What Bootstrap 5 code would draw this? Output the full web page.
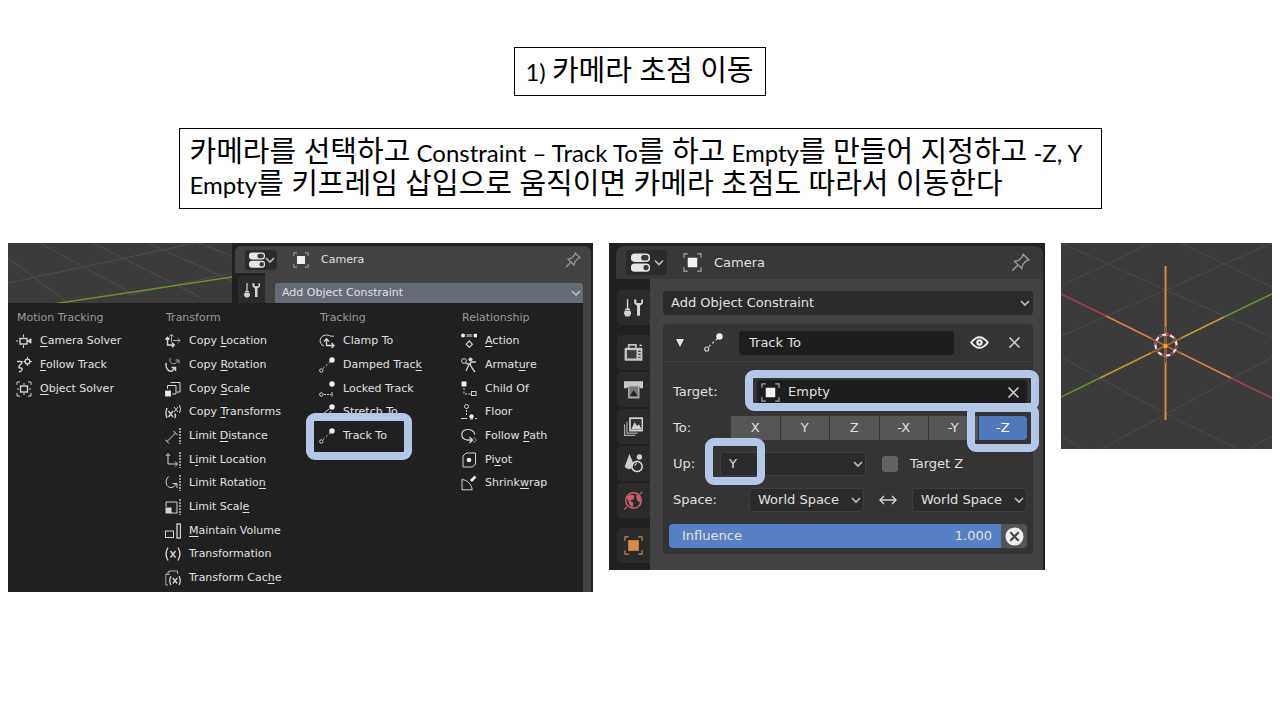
<!DOCTYPE html>
<html lang="ko">
<head>
<meta charset="utf-8">
<meta name="viewport" content="width=device-width, initial-scale=1">
<title>카메라 초점 이동</title>
<link href="https://cdn.jsdelivr.net/npm/bootstrap@5.3.0/dist/css/bootstrap.min.css" rel="stylesheet">
<script src="https://cdn.jsdelivr.net/npm/bootstrap@5.3.0/dist/js/bootstrap.bundle.min.js" defer></script>
<style>
body{background:#fff;color:#000;font-family:Lato,"Noto Sans CJK KR",sans-serif}
.slide-text{font-size:29px;line-height:32px;font-weight:400;border:1px solid #000}
.latin{font-size:24px;line-height:1px}
.slide-title{padding:6px 11px 9px 10px;margin-top:47px}
.slide-body{max-width:923px;padding:6px 10px 9px;margin-top:32px}
.shots{display:grid;grid-template-columns:585fr 436fr 211fr;gap:16px;padding:0 8px;margin-top:34px;align-items:start}
.shot{font-family:"DejaVu Sans",sans-serif;color:#e0e0e0;background:#202020;min-width:0}
.shot button,.shot input,.shot select{font:inherit;color:inherit;border:0}
.ico{width:16px;height:16px;flex:none;fill:none;stroke:#d4d4d4;stroke-width:1;overflow:visible}
.mark-box::after{content:"";position:absolute;border:8px solid #b4c7e7;border-radius:9px;z-index:3;pointer-events:none}

/* constraint menu */
.shot-menu{font-size:11px;line-height:16px}
.view{flex:224 1 0;min-width:0;height:60px;display:block;background:#3b3b3b}
.props{flex:356 1 0;min-width:0;padding:3px 2px 0 3px}
.props-head{background:#424242;height:27px;border-radius:6px 6px 0 0;padding:0 10px 0 10px}
.editor-type{background:#2b2b2b;border-radius:4px;padding:0 2px 0 4px;height:20px}
.props-body{height:30px;background:#424242}
.props-tab{width:30px;background:#202020;padding:3px 0 0 3px}
.props-tab button{width:27px;height:27px;background:#2b2b2b;border-radius:4px 0 0 0}
.add-btn{margin:10px 8px 0 10px;height:20px;background:#666b78!important;border-radius:3px 3px 0 0;padding:0 2px 0 7px}
.menu-pop{background:#202020;border-right:8px solid #424242;margin-right:2px;padding:3px 0 2px 8px;display:grid;grid-template-columns:149fr 154fr 142fr 122fr;min-height:289px}
.menu-col{display:grid;grid-template-rows:repeat(12,1fr);min-width:0;align-items:center}
.menu-col h2{font-size:11px;font-weight:400;color:#999;margin:0 0 0 1px;line-height:16px}
.menu-item{background:none;padding:0;text-align:left;position:relative;white-space:nowrap;display:flex;align-items:center;gap:8px}
.menu-item u{text-underline-offset:2px;text-decoration-thickness:1px}
.picked::after{left:-13px;width:106px;top:-15px;height:47px}

/* constraint panel */
.shot-panel{font-size:13px;line-height:20px;padding:3px 2px 0 7px}
.shot-panel .ico{width:19px;height:19px}
.shot-panel .ico.ico-sm{width:16px;height:16px}
.shot-panel .ico.ico-chev,.ico.ico-chev{width:10px}
.panel-head{background:#383838;border-radius:8px 8px 0 0;height:33px;padding:0 13px 0 10px}
.panel-head .editor-type{height:25px;padding:0 3px 0 5px}
.tabs-col{width:34px;flex:none;background:#202020;padding:11px 0 0 1px;display:flex;flex-direction:column;gap:2px}
.tabs-col button{height:35px;width:33px;background:#2a2a2a;border-radius:5px 0 0 5px;padding:0;display:flex;align-items:center;justify-content:center}
.panel-main{background:#424242;padding:12px 10px 16px 13px;min-width:0}
.fld{background-color:#2b2b2b!important;border-radius:4px;height:24px;padding:0 8px;min-width:0;width:100%;outline:0}
select.fld{appearance:none;padding-right:22px;background-image:url("data:image/svg+xml,%3Csvg xmlns='http://www.w3.org/2000/svg' viewBox='0 0 10 10'%3E%3Cpath d='M1 3l4 4 4-4' fill='none' stroke='%23bbb' stroke-width='1.7'/%3E%3C/svg%3E");background-repeat:no-repeat;background-position:right 3px center;background-size:10px}
select.edged{box-shadow:inset 0 0 0 1px #3e3e3e;padding-left:9px}
.fld.dark{background-color:#1d1d1d!important}
input.fld.dark{padding-left:10px}
.cons{background:#343434;border-radius:4px;margin-top:9px}
.cons-head{height:38px;border-bottom:1px solid #404040;padding:0 9px 0 9px}
.cons-body{padding:18px 6px 6px 10px;display:grid;row-gap:12px}
.cons-row{display:flex;align-items:center;height:24px;position:relative}
.infl-row{margin-left:-4px}
.lab-to{width:58px;flex:none}.lab-target{width:84px;flex:none}.lab-up{width:47px;flex:none}.lab-space{width:76px;flex:none}
.up-pick{flex:146 1 0}
.up-side{flex:145 1 0}
.hl{position:relative}
.hl-target::after{inset:-10px -12px -7px}
.hl-z::after{inset:-12px}
.hl-y::after{left:-15px;top:-14px;width:60px;height:47px}
.axis{display:grid;grid-template-columns:repeat(6,1fr);gap:1px;flex:1}
.axis button{background:#565656;height:24px;padding:0;width:100%}
.axis .on{background:#5079bd;color:#fff;border-radius:0 4px 4px 0}
.chk{appearance:none;width:16px;height:16px;background:#636363;border-radius:3px;margin:0}
.infl{position:relative;flex:1;height:24px}
.infl input{appearance:none;width:100%;height:24px;background:#5680c2;border-radius:4px 0 0 4px;display:block;margin:0}
.infl input::-webkit-slider-thumb{appearance:none;width:1px;height:24px;background:#5680c2}
.infl-text{position:absolute;inset:0;padding:0 9px 0 13px;pointer-events:none}
.clear-btn{width:26px;height:24px;background:#545454!important;border-radius:0 4px 4px 0;padding:0}
.empty-view{background:#3b3b3b}
</style>
</head>
<body>
<svg width="0" height="0" class="position-absolute" aria-hidden="true">
<symbol id="i-editor" viewBox="0 0 16 16"><rect x="0" y="0.5" width="16" height="7" rx="3" fill="#e6e6e6" stroke="none"/><rect x="8.500" y="1.700" width="6.300" height="4.600" rx="2" fill="#3a3a3a" stroke="none"/><rect x="0" y="8.800" width="16" height="7" rx="3" fill="#e6e6e6" stroke="none"/><rect x="10.500" y="10" width="4.400" height="4.600" rx="2" fill="#3a3a3a" stroke="none"/></symbol>
<symbol id="i-object" viewBox="0 0 16 16"><rect x="4" y="4" width="8" height="8" fill="#f2f2f2" stroke="none"/><path d="M4 .8H.8V4M12 .8h3.2V4M4 15.2H.8V12M12 15.2h3.2V12" stroke="#a8a8a8"/></symbol>
<symbol id="i-pin" viewBox="0 0 16 16"><path d="M1 15l5-5M3 7l6 6 1-3.500 3-3 2-.7L10.200 1 9.500 3.200 6.500 6.200z" stroke="#989898" stroke-width="1.200"/></symbol>
<symbol id="i-chev" viewBox="0 0 10 10"><path d="M1 3l4 4 4-4" stroke="#bbb" stroke-width="1.700"/></symbol>
<symbol id="i-tool" viewBox="0 0 16 16"><path d="M3 1v8M1 9.500h4" stroke-width="1.200"/><path d="M1 11h4l.5 2-1 2h-3l-1-2z" fill="#d4d4d4"/><path d="M8.500 1v3.500l2.500 2V15h2.500V6.500l2.500-2V1l-1.500.5v2.700h-4V1.500z" fill="#d4d4d4" stroke="none"/></symbol>
<symbol id="i-camsolve" viewBox="0 0 16 16"><rect x="4" y="5.500" width="7" height="5.500" stroke-width="1.400"/><path d="M0 8h2M7.500 1.500v3M7.500 12v3"/><path d="M11.500 8L15 5.800v4.400z" fill="#d4d4d4"/></symbol>
<symbol id="i-follow" viewBox="0 0 16 16"><path d="M1 4.500h3.500c3 0 1 2-.5 3.500s-2 3 1 3c2 0 1.500 3-2 4" stroke-width="1.400"/><circle cx="11.500" cy="4.500" r="2.400" stroke-width="1.400"/><path d="M11.500 0v2M11.500 7v2M7.500 4.500H9M14 4.500h2"/></symbol>
<symbol id="i-objsolve" viewBox="0 0 16 16"><rect x="4.500" y="5" width="7" height="6" stroke-width="1.400"/><path d="M4 1H1v3M12 1h3v3M4 15H1v-3M12 15h3v-3M8 2v2M8 12v2M1 8h2M13 8h2"/></symbol>
<symbol id="i-cloc" viewBox="0 0 16 16"><path d="M2.500 4.500V12H9M.5 6.500l2-2.300 2 2.300M7 9.700L9.300 12 7 14.300" stroke-width="1.400"/><path d="M6.500 9V1.500M4.500 3.500l2-2.300 2 2.300M8 7.500h7M12.500 5l2.700 2.500L12.500 10" stroke="#aaa"/></symbol>
<symbol id="i-crot" viewBox="0 0 16 16"><path d="M5.500 1C3.500 4 6 7.500 10 6.500l3.500-3M10.500 3H14v3.500" stroke="#aaa"/><path d="M1.200 6c-1 5 2 9 6 8l2.500-3M6.500 10.500h4V14" stroke-width="1.400"/></symbol>
<symbol id="i-cscale" viewBox="0 0 16 16"><path d="M5.500 1.500h9.500V11h-3M2.500 8V4.500h8.500v8.500H7"/><rect x=".5" y="10" width="5" height="5" fill="#f0f0f0"/></symbol>
<symbol id="i-ctrans" viewBox="0 0 16 16"><path d="M2 4Q0 9 2 14M10 9.500Q11 13 9.500 14M3.500 7l4.500 6M8 7l-4.500 6" stroke-width="1.400"/><path d="M9 3l4 5M13 3L9 8M14.500 1Q16.500 5 14.500 9"/></symbol>
<symbol id="i-ldist" viewBox="0 0 16 16"><path d="M2 13.500L10.500 5M0 11.500l4 4M8.500 3l4 4"/><path d="M15 0v16" stroke-dasharray="2 1" stroke-width="1.300"/></symbol>
<symbol id="i-lloc" viewBox="0 0 16 16"><path d="M3 2v10h9M1 4l2-2.500L5 4M10 9.500l2.500 2.500-2.500 2.500"/><path d="M15 0v16" stroke-dasharray="2 1" stroke-width="1.300"/></symbol>
<symbol id="i-lrot" viewBox="0 0 16 16"><path d="M3.500 1.500C-1 6 1.500 13 6 12.500c3 0 4-2 5.500-4M7.500 8.500H12V13"/><path d="M15 0v16" stroke-dasharray="2 1" stroke-width="1.300"/></symbol>
<symbol id="i-lscale" viewBox="0 0 16 16"><path d="M1 8V3h11v11H6"/><rect x="1" y="9" width="5" height="5" fill="#d4d4d4"/><path d="M15 0v16" stroke-dasharray="2 1" stroke-width="1.300"/></symbol>
<symbol id="i-vol" viewBox="0 0 16 16"><rect x=".5" y="8" width="8" height="6.500"/><rect x="12" y="1" width="3.500" height="14" stroke-width="1.300"/></symbol>
<symbol id="i-trans" viewBox="0 0 16 16"><path d="M3 1.500Q-.8 8 3 14.500M13 1.500q3.800 6.500 0 13M5.500 5l5 6.500M10.500 5l-5 6.500" stroke-width="1.400"/></symbol>
<symbol id="i-cache" viewBox="0 0 16 16"><path d="M3 15H.8V4.500L4 1h8.500v3M4 1v3.500H1" stroke="#aaa"/><path d="M6 6q-2.500 4.500 0 9M14 6q2.500 4.500 0 9M7.800 8l4.400 5.500M12.200 8l-4.400 5.500" stroke-width="1.300"/></symbol>
<symbol id="i-clamp" viewBox="0 0 16 16"><path d="M5 13C-1 11 0 2 7.500 2c3 0 4 2 7.500 1"/><path d="M7.500 13V6.500M5 8.500l2.500-2.700L10 8.500M7.500 12.500H15M12.500 10l2.500 2.500-2.500 2.500" stroke-width="1.400"/></symbol>
<symbol id="i-track" viewBox="0 0 16 16"><circle cx="13" cy="3" r="2.700" fill="#eee" stroke="none"/><circle cx="2.300" cy="13.500" r="1.700"/><path d="M4 11.500L11 5" stroke-dasharray="2 2"/></symbol>
<symbol id="i-stretch" viewBox="0 0 16 16"><circle cx="13" cy="3" r="2.700" fill="#eee" stroke="none"/><path d="M10 5L4 10M12 7l-4 6"/><circle cx="2.300" cy="13.500" r="1.700"/></symbol>
<symbol id="i-locked" viewBox="0 0 16 16"><circle cx="13" cy="3" r="2.700" fill="#eee" stroke="none"/><circle cx="2.300" cy="13.500" r="1.700"/><path d="M5 13.500h7" stroke-dasharray="2 1"/><path d="M13 11v4.500"/></symbol>
<symbol id="i-action" viewBox="0 0 16 16"><circle cx="2" cy="2.500" r="2" fill="#eee" stroke="none"/><circle cx="14.500" cy="2.500" r="2" fill="#eee" stroke="none"/><path d="M4.500 1h7.500L10.500 2.500 12 4H4.500L6 2.500z" fill="#888" stroke="none"/><path d="M8.300 8l3 3.200-3 3.200-3-3.200z" stroke-width="1.200"/></symbol>
<symbol id="i-arm" viewBox="0 0 16 16"><circle cx="3" cy="4" r="2.400"/><circle cx="9.500" cy="2.500" r="1.600" fill="#ddd"/><path d="M5 6l3 1.500L5 14M8 7l3-2h4M9 7l2 4 3 4" stroke-width="1.300"/></symbol>
<symbol id="i-child" viewBox="0 0 16 16"><rect x=".5" y=".5" width="5" height="5" fill="#eee" stroke="none"/><path d="M3 7v6h7" stroke-dasharray="2 1.500"/><rect x="10.500" y="10.500" width="4.500" height="4"/></symbol>
<symbol id="i-floor" viewBox="0 0 16 16"><circle cx="5.500" cy="2.500" r="2"/><path d="M5.500 6v5" stroke-dasharray="2 1"/><circle cx="10.500" cy="12.500" r="2.200" fill="#eee" stroke="none"/><path d="M0 14.500h6M9 15h3M14 14.500h2"/></symbol>
<symbol id="i-path" viewBox="0 0 16 16"><path d="M6 12C-1 11-1 2 6.500 1.500c4-.2 6.500 2 7.500 5" stroke-width="1.200"/><path d="M6 12h5M8.500 9l3 3-3 3" stroke-width="1.400"/><path d="M12.500 9l3 3-3 3" stroke="#999"/></symbol>
<symbol id="i-pivot" viewBox="0 0 16 16"><path d="M2 4l3-3h9.500v11l-3 3H2z"/><circle cx="8" cy="8" r="2.300" fill="#eee" stroke="none"/></symbol>
<symbol id="i-shrink" viewBox="0 0 16 16"><path d="M1 4.500v10.300h10.200C10.500 9 6 5 1 4.500z"/><path d="M10 6l4.500-4.500" stroke-width="2.600" stroke="#eee"/></symbol>
<symbol id="i-render" viewBox="0 0 16 16"><path d="M4 4V1.500h6V4" stroke="#c4c4c4" stroke-width="1.500"/><rect x=".5" y="4" width="15" height="11" rx="1" fill="#c4c4c4" stroke="none"/><rect x="2.500" y="6" width="8" height="7" fill="#3b3b3b" stroke="none"/><path d="M12 7h2M12 9.500h2M12 12h2" stroke="#333"/><path d="M13 2h2" stroke-width="1.300"/></symbol>
<symbol id="i-print" viewBox="0 0 16 16"><path d="M0 1h16v6h-2.500V6h-11v1H0z" fill="#c8c8c8" stroke="none"/><rect x="4" y="5" width="8.500" height="10" fill="#777" stroke="#bbb"/><path d="M5 13.500l3-5 3.500 5z" fill="#222" stroke="none"/></symbol>
<symbol id="i-layers" viewBox="0 0 16 16"><path d="M2.500 4v9.500h9M.5 6v9.500h9" stroke="#aaa"/><rect x="5" y="1" width="10.500" height="10.500" fill="#333" stroke-width="1.400"/><path d="M6 10.500l3-6 2 3 1.500-1.500 2.500 4.500z" fill="#d0d0d0" stroke="none"/></symbol>
<symbol id="i-scene" viewBox="0 0 16 16"><path d="M4.500 0L9 10q-4 5-8.500 1z" fill="#ccc" stroke="none"/><circle cx="13" cy="2.500" r="2.300" fill="#ccc" stroke="none"/><circle cx="11" cy="10.500" r="4.300" fill="#2a2a2a" stroke-width="1.300"/><path d="M9 10q.5-2 2-2"/></symbol>
<symbol id="i-world" viewBox="0 0 16 16"><circle cx="8" cy="8" r="6.500" stroke="#c95f6b" stroke-width="1.300"/><path d="M2 5l4-2 3 1-1 3-3 1 3 2-1 4-2-2zM10 3l4 2v5l-3-2z" fill="#c95f6b" stroke="none"/><path d="M0 15.500l2.500-2M13 3l2.500-2.500" stroke="#c95f6b"/></symbol>
<symbol id="i-eye" viewBox="0 0 16 16"><path d="M1 8q7-9 14 0-7 9-14 0z" stroke="#eee" stroke-width="1.700"/><circle cx="8" cy="8" r="2.700" stroke="none" fill="#eee"/><circle cx="8" cy="8" r=".9" fill="#333" stroke="none"/></symbol>
<symbol id="i-x" viewBox="0 0 16 16"><path d="M3.800 3.800l8.400 8.400M12.200 3.800l-8.400 8.400" stroke-width="1.300"/></symbol>
</svg>

<main>
<div class="d-flex flex-column align-items-center px-2">
<h1 class="slide-text slide-title mb-0"><span class="latin">1) </span>카메라 초점 이동</h1>
<p class="slide-text slide-body w-100 mb-0">카메라를 선택하고<span class="latin"> Constraint – Track To</span>를 하고<span class="latin"> Empty</span>를 만들어 지정하고<span class="latin"> -Z, Y</span><br><span class="latin">Empty</span>를 키프레임 삽입으로 움직이면 카메라 초점도 따라서 이동한다</p>
</div>

<div class="shots">
<section class="shot shot-menu" aria-label="Add Object Constraint">
<div class="d-flex">
<svg class="view" viewBox="0 0 224 60" preserveAspectRatio="none" aria-hidden="true"><g stroke="#4d4d4d" fill="none"><path d="M0 40L224-8M0 15L60 60M32 0l95 52M85 0l107 54M140 0l84 38M190 0l34 13M120 52L224 30"/></g><path d="M45 61L224 34" stroke="#6b9029" stroke-width="1.500"/></svg>
<div class="props">
<div class="props-head d-flex align-items-center"><button type="button" class="editor-type d-flex align-items-center" aria-label="Editor type"><svg class="ico"><use href="#i-editor"/></svg><svg class="ico ico-chev"><use href="#i-chev"/></svg></button><svg class="ico ms-3"><use href="#i-object"/></svg><span class="ms-2 ps-1">Camera</span><svg class="ico ms-auto"><use href="#i-pin"/></svg></div>
<div class="props-body d-flex"><div class="props-tab"><button type="button" class="p-0" aria-label="Tool"><svg class="ico"><use href="#i-tool"/></svg></button></div><button type="button" class="add-btn flex-fill d-flex align-items-center justify-content-between"><span>Add Object Constraint</span><svg class="ico ico-chev"><use href="#i-chev"/></svg></button></div>
</div>
</div>
<div class="menu-pop">
<div class="menu-col"><h2>Motion Tracking</h2>
<button class="menu-item" type="button"><svg class="ico"><use href="#i-camsolve"/></svg><span><u>C</u>amera Solver</span></button>
<button class="menu-item" type="button"><svg class="ico"><use href="#i-follow"/></svg><span><u>F</u>ollow Track</span></button>
<button class="menu-item" type="button"><svg class="ico"><use href="#i-objsolve"/></svg><span><u>O</u>bject Solver</span></button></div>
<div class="menu-col"><h2>Transform</h2>
<button class="menu-item" type="button"><svg class="ico"><use href="#i-cloc"/></svg><span>Copy <u>L</u>ocation</span></button>
<button class="menu-item" type="button"><svg class="ico"><use href="#i-crot"/></svg><span>Copy <u>R</u>otation</span></button>
<button class="menu-item" type="button"><svg class="ico"><use href="#i-cscale"/></svg><span>Copy <u>S</u>cale</span></button>
<button class="menu-item" type="button"><svg class="ico"><use href="#i-ctrans"/></svg><span>Copy <u>T</u>ransforms</span></button>
<button class="menu-item" type="button"><svg class="ico"><use href="#i-ldist"/></svg><span>Limit <u>D</u>istance</span></button>
<button class="menu-item" type="button"><svg class="ico"><use href="#i-lloc"/></svg><span>L<u>i</u>mit Location</span></button>
<button class="menu-item" type="button"><svg class="ico"><use href="#i-lrot"/></svg><span>Limit Rotatio<u>n</u></span></button>
<button class="menu-item" type="button"><svg class="ico"><use href="#i-lscale"/></svg><span>Limit Scal<u>e</u></span></button>
<button class="menu-item" type="button"><svg class="ico"><use href="#i-vol"/></svg><span><u>M</u>aintain Volume</span></button>
<button class="menu-item" type="button"><svg class="ico"><use href="#i-trans"/></svg><span>Transformation</span></button>
<button class="menu-item" type="button"><svg class="ico"><use href="#i-cache"/></svg><span>Transform Cac<u>h</u>e</span></button></div>
<div class="menu-col"><h2>Tracking</h2>
<button class="menu-item" type="button"><svg class="ico"><use href="#i-clamp"/></svg><span>Clamp To</span></button>
<button class="menu-item" type="button"><svg class="ico"><use href="#i-track"/></svg><span>Damped Trac<u>k</u></span></button>
<button class="menu-item" type="button"><svg class="ico"><use href="#i-locked"/></svg><span>Locked Track</span></button>
<button class="menu-item" type="button"><svg class="ico"><use href="#i-stretch"/></svg><span>Stretch To</span></button>
<button class="menu-item mark-box picked" type="button"><svg class="ico"><use href="#i-track"/></svg><span>Track To</span></button></div>
<div class="menu-col"><h2>Relationship</h2>
<button class="menu-item" type="button"><svg class="ico"><use href="#i-action"/></svg><span><u>A</u>ction</span></button>
<button class="menu-item" type="button"><svg class="ico"><use href="#i-arm"/></svg><span>Armat<u>u</u>re</span></button>
<button class="menu-item" type="button"><svg class="ico"><use href="#i-child"/></svg><span>Child Of</span></button>
<button class="menu-item" type="button"><svg class="ico"><use href="#i-floor"/></svg><span>Floor</span></button>
<button class="menu-item" type="button"><svg class="ico"><use href="#i-path"/></svg><span>Follow <u>P</u>ath</span></button>
<button class="menu-item" type="button"><svg class="ico"><use href="#i-pivot"/></svg><span>Pi<u>v</u>ot</span></button>
<button class="menu-item" type="button"><svg class="ico"><use href="#i-shrink"/></svg><span>Shrink<u>w</u>rap</span></button></div>
</div>
</section>

<section class="shot shot-panel" aria-label="Track To constraint">
<div class="panel-head d-flex align-items-center"><button type="button" class="editor-type d-flex align-items-center gap-1" aria-label="Editor type"><svg class="ico"><use href="#i-editor"/></svg><svg class="ico ico-chev"><use href="#i-chev"/></svg></button><svg class="ico ms-3"><use href="#i-object"/></svg><span class="ms-2 ps-1">Camera</span><svg class="ico ms-auto"><use href="#i-pin"/></svg></div>
<div class="d-flex">
<div class="tabs-col">
<button type="button" aria-label="Tool" class="mb-2"><svg class="ico"><use href="#i-tool"/></svg></button>
<button type="button" aria-label="Render"><svg class="ico"><use href="#i-render"/></svg></button>
<button type="button" aria-label="Output"><svg class="ico"><use href="#i-print"/></svg></button>
<button type="button" aria-label="View layer"><svg class="ico"><use href="#i-layers"/></svg></button>
<button type="button" aria-label="Scene"><svg class="ico"><use href="#i-scene"/></svg></button>
<button type="button" aria-label="World" class="mb-2"><svg class="ico"><use href="#i-world"/></svg></button>
<button type="button" aria-label="Object"><svg class="ico" viewBox="0 0 16 16"><rect x="3.500" y="3.500" width="9" height="9" fill="#d58c45" stroke="none"/><path d="M4 .8H.8V4M12 .8h3.200V4M4 15.200H.8V12M12 15.200h3.200V12" stroke="#c98a50"/></svg></button>
</div>
<div class="panel-main flex-fill">
<select class="fld d-block" aria-label="Add Object Constraint"><option>Add Object Constraint</option></select>
<div class="cons">
<div class="cons-head d-flex align-items-center">
<svg class="ico ico-sm" viewBox="0 0 16 16" aria-hidden="true"><path d="M4 4h8L8 12z" fill="#e6e6e6" stroke="none"/></svg>
<svg class="ico ms-3 me-3"><use href="#i-track"/></svg>
<input class="fld dark flex-fill" type="text" value="Track To" aria-label="Constraint name">
<svg class="ico ms-3"><use href="#i-eye"/></svg><svg class="ico ms-3"><use href="#i-x"/></svg>
</div>
<div class="cons-body">
<div class="cons-row"><label class="lab-target" for="target">Target:</label>
<div class="hl hl-target mark-box flex-fill d-flex align-items-center fld dark px-1"><svg class="ico"><use href="#i-object"/></svg><input id="target" type="text" value="Empty" class="bg-transparent w-100 ms-2 p-0"><svg class="ico"><use href="#i-x"/></svg></div></div>
<div class="cons-row"><span class="lab-to">To:</span>
<div class="axis" role="group" aria-label="To"><button type="button">X</button><button type="button">Y</button><button type="button">Z</button><button type="button">-X</button><button type="button">-Y</button><button type="button" class="on hl hl-z mark-box">-Z</button></div></div>
<div class="cons-row"><label class="lab-up" for="up">Up:</label>
<div class="hl hl-y mark-box up-pick"><select id="up" class="fld edged d-block"><option>Y</option></select></div>
<div class="d-flex align-items-center up-side ms-3"><input class="chk" type="checkbox" id="tz"><label for="tz" class="ms-2 ps-1">Target Z</label></div></div>
<div class="cons-row"><label class="lab-space" for="sp1">Space:</label>
<select id="sp1" class="fld edged"><option>World Space</option></select>
<svg class="ico ico-sm mx-3" viewBox="0 0 16 16" aria-hidden="true"><path d="M0 8h16M4 4L0 8l4 4M12 4l4 4-4 4" stroke-width="1.400"/></svg>
<select class="fld edged" aria-label="Owner space"><option>World Space</option></select></div>
<div class="cons-row infl-row"><div class="infl"><input type="range" id="infl" min="0" max="1" step="0.001" value="1"><div class="infl-text d-flex align-items-center justify-content-between"><label for="infl">Influence</label><output for="infl">1.000</output></div></div>
<button type="button" class="clear-btn d-flex align-items-center justify-content-center" aria-label="Disable constraint"><svg class="ico" viewBox="0 0 16 16"><circle cx="8" cy="8" r="7.600" fill="#eee" stroke="none"/><path d="M4.500 4.500l7 7M11.500 4.500l-7 7" stroke="#444" stroke-width="1.800"/></svg></button></div>
</div>
</div>
</div>
</div>
</section>

<section class="shot" aria-label="Empty">
<svg class="d-block w-100 empty-view" viewBox="0 0 211 206" role="img" aria-label="Empty at the 3D cursor">
<path d="M0 43L90 0M0 93L105 47L211 0M120 0L211 44M0 0L105 47L211 94M0 114L105 171L176 206M211 114L105 171L40 206M0 193l22 13M211 193l-23 13" stroke="#4b4b4b" fill="none"/>
<g fill="none" stroke-width="1.500"><path d="M0 51L45 73M170 135L211 155" stroke="#a5404f"/><path d="M0 154L39 135M163 74L211 51" stroke="#66912c"/><path d="M45 73L170 135" stroke="#d9824a"/><path d="M39 135L163 74" stroke="#c69a35"/><path d="M104.500 23v154" stroke="#da8a3c" stroke-width="2"/>
<path d="M104.500 84v36M90 95l30 15M90 110l30-15" stroke="#4a3a2c" stroke-width=".7"/>
<circle cx="105" cy="102" r="10.500" stroke="#eee" stroke-width="2"/><circle cx="105" cy="102" r="10.500" stroke="#b02838" stroke-width="2" stroke-dasharray="4.200 4.040"/></g>
<circle cx="104.500" cy="103" r="2.300" fill="#ffa11e"/>
</svg>
</section>
</div>
</main>
</body>
</html>
